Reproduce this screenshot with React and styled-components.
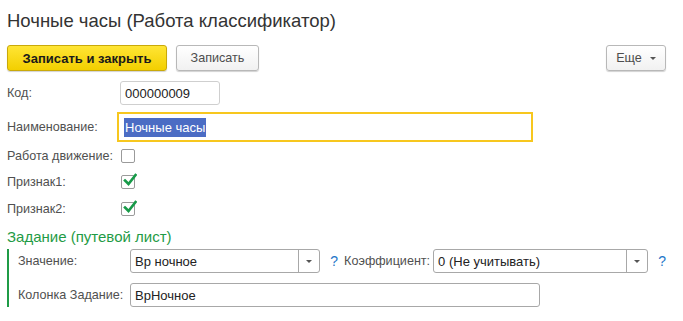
import React from 'react'
import styled, { createGlobalStyle } from 'styled-components'

const GlobalStyle = createGlobalStyle`
  html, body {
    margin: 0;
    padding: 0;
    background: #fff;
  }
  body {
    font-family: Arial, "Liberation Sans", sans-serif;
    font-size: 13px;
    color: #333;
  }
`

const Page = styled.div`
  width: 683px;
  height: 321px;
  box-sizing: border-box;
  padding: 10px 17px 0 7px;
  overflow: hidden;
`

const Title = styled.h1`
  margin: 0;
  font-size: 18.5px;
  line-height: 22px;
  font-weight: normal;
  color: #333;
`

const Toolbar = styled.div`
  display: flex;
  align-items: center;
  gap: 9px;
  margin-top: 13px;
`

const Button = styled.button`
  width: ${p => p.$w}px;
  height: 26px;
  box-sizing: border-box;
  padding: 0;
  border-radius: 3px;
  font-family: Arial, "Liberation Sans", sans-serif;
  font-size: ${p => (p.$primary ? '13px' : '12.6px')};
  display: flex;
  align-items: center;
  justify-content: center;
  gap: 8px;
  cursor: pointer;
  border: 1px solid ${p => (p.$primary ? '#c9a90a' : '#b8b8b8')};
  color: ${p => (p.$primary ? '#1a1a1a' : '#4d4d4d')};
  font-weight: ${p => (p.$primary ? 'bold' : 'normal')};
  background: ${p =>
    p.$primary
      ? 'linear-gradient(#ffe535, #f3cf00)'
      : 'linear-gradient(#ffffff, #f1f1f1)'};
  box-shadow: 0 1px 1px rgba(0, 0, 0, 0.18);
  margin-left: ${p => (p.$right ? 'auto' : '0')};
`

const Caret = styled.span`
  width: 0;
  height: 0;
  border-left: 3px solid transparent;
  border-right: 3px solid transparent;
  border-top: 3px solid #555;
`

const Form = styled.div`
  display: flex;
  flex-direction: column;
  margin-top: 10px;
`

const Row = styled.div`
  display: flex;
  align-items: center;
  height: ${p => p.$h || 24}px;
  margin-top: ${p => p.$mt || 0}px;
`

const Label = styled.div`
  width: ${p => p.$w || 113}px;
  flex-shrink: 0;
  font-size: 12.6px;
  color: #505050;
  white-space: nowrap;
`

const Field = styled.div`
  width: ${p => p.$w}px;
  height: 24px;
  box-sizing: border-box;
  border: 1px solid ${p => (p.$light ? '#cfcfcf' : '#a8a8a8')};
  border-radius: 3px;
  display: flex;
  align-items: center;
  padding-left: 4px;
  color: #222;
  background: #fff;
`

const FocusField = styled.div`
  width: 416px;
  height: 30px;
  box-sizing: border-box;
  margin-left: -3px;
  border: 2px solid #f7c71e;
  display: flex;
  align-items: center;
  padding-left: 5px;
`

const Selected = styled.span`
  background: #4b6cc4;
  color: #fff;
  line-height: 19px;
  padding: 0 1px;
`

const Box = styled.div`
  width: 14px;
  height: 14px;
  box-sizing: border-box;
  border: 1px solid #9a9a9a;
  border-radius: 2px;
  position: relative;
  margin-left: 1px;
`

const Tick = styled.svg`
  position: absolute;
  left: 1px;
  top: -3px;
`

const Checkbox = ({ checked }) => (
  <Box>
    {checked && (
      <Tick width="14" height="14" viewBox="0 0 14 14">
        <path d="M2 7.5 L5.5 11 L12.5 2" fill="none" stroke="#179a48" strokeWidth="2.6" strokeLinecap="square" />
      </Tick>
    )}
  </Box>
)

const SectionTitle = styled.div`
  font-size: 15px;
  line-height: 18px;
  color: #1f9b46;
  margin-top: 9px;
`

const Group = styled.div`
  margin-top: 3px;
  border-left: 2px solid #1f9b46;
  padding-left: 9px;
  display: flex;
  flex-direction: column;
  gap: 10px;
`

const Select = styled.div`
  width: ${p => p.$w}px;
  height: 24px;
  box-sizing: border-box;
  border: 1px solid #a8a8a8;
  border-radius: 3px;
  display: flex;
  align-items: stretch;
  background: #fff;
`

const SelectText = styled.div`
  flex: 1;
  display: flex;
  align-items: center;
  padding-left: 4px;
  color: #222;
`

const SelectButton = styled.div`
  width: 20px;
  border-left: 1px solid #a8a8a8;
  display: flex;
  align-items: center;
  justify-content: center;
`

const Help = styled.span`
  color: #1f77c9;
  font-size: 14px;
  margin: 0 ${p => p.$mr || 0}px 0 10px;
`

const Dropdown = ({ w, value }) => (
  <Select $w={w}>
    <SelectText>{value}</SelectText>
    <SelectButton>
      <Caret />
    </SelectButton>
  </Select>
)

export default function App() {
  return (
    <Page>
      <GlobalStyle />
      <Title>Ночные часы (Работа классификатор)</Title>
      <Toolbar>
        <Button $primary $w={160}>Записать и закрыть</Button>
        <Button $w={83}>Записать</Button>
        <Button $right $w={60}>
          Еще <Caret />
        </Button>
      </Toolbar>
      <Form>
        <Row $h={24}>
          <Label>Код:</Label>
          <Field $w={100} $light>000000009</Field>
        </Row>
        <Row $h={30} $mt={7}>
          <Label>Наименование:</Label>
          <FocusField>
            <Selected>Ночные часы</Selected>
          </FocusField>
        </Row>
        <Row $h={20} $mt={4}>
          <Label>Работа движение:</Label>
          <Checkbox />
        </Row>
        <Row $h={20} $mt={6}>
          <Label>Признак1:</Label>
          <Checkbox checked />
        </Row>
        <Row $h={20} $mt={7}>
          <Label>Признак2:</Label>
          <Checkbox checked />
        </Row>
        <SectionTitle>Задание (путевой лист)</SectionTitle>
        <Group>
          <Row $h={24}>
            <Label $w={112}>Значение:</Label>
            <Dropdown w={192} value="Вр ночное" />
            <Help $mr={6}>?</Help>
            <Label $w={89}>Коэффициент:</Label>
            <Dropdown w={217} value="0 (Не учитывать)" />
            <Help>?</Help>
          </Row>
          <Row $h={24}>
            <Label $w={112}>Колонка Задание:</Label>
            <Field $w={410}>ВрНочное</Field>
          </Row>
        </Group>
      </Form>
    </Page>
  )
}
